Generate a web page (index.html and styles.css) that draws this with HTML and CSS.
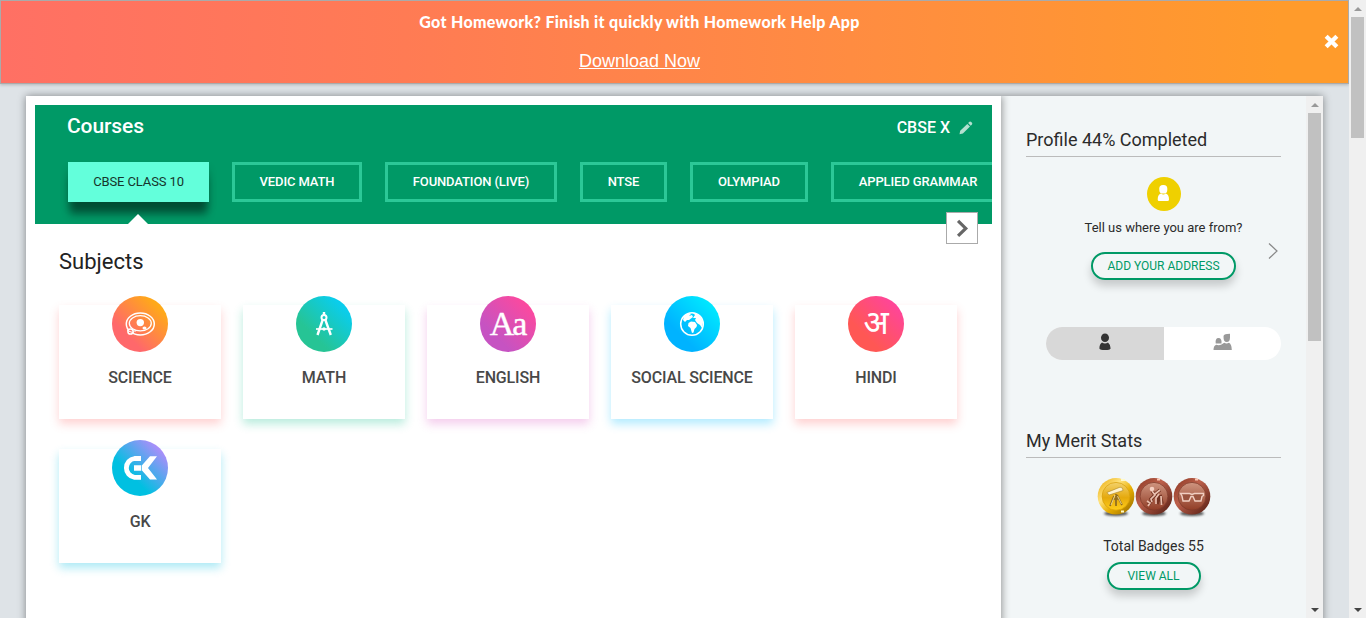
FILE: index.html
```html
<!DOCTYPE html>
<html lang="en">
<head>
<meta charset="utf-8">
<title>Courses</title>
<link rel="stylesheet" href="styles.css">
</head>
<body>
<div class="page">
  <header class="banner">
    <div class="banner-text">
      <p class="banner-title">Got Homework? Finish it quickly with Homework Help App</p>
      <a class="banner-link">Download Now</a>
    </div>
    <svg class="banner-close" viewBox="0 0 14 14"><path d="M2 2 12 12M12 2 2 12" stroke="#fff" stroke-width="4"/></svg>
  </header>
  <div class="panel">
    <main class="main">
      <section class="courses">
        <div class="courses-head">
          <h1 class="courses-title">Courses</h1>
          <div class="grade">CBSE X
            <svg class="pencil" viewBox="0 0 14 14"><path d="M.5 13.2 1.2 9.8 8.3 2.9 11 5.6 3.9 12.5zM9.1 2.1 10.5.8Q11.4.2 12.2 1L13 1.8Q13.6 2.6 13 3.5L11.7 4.8z" fill="#b3e0d0"/></svg>
          </div>
        </div>
        <div class="tabs">
          <span class="tab tab-active">CBSE CLASS 10</span>
          <span class="tab tab-2">VEDIC MATH</span>
          <span class="tab tab-3">FOUNDATION (LIVE)</span>
          <span class="tab tab-4">NTSE</span>
          <span class="tab tab-5">OLYMPIAD</span>
          <span class="tab tab-6">APPLIED GRAMMAR</span>
        </div>
      </section>
      <span class="next"><svg viewBox="0 0 32 32"><path d="M11.800 8.500 20 16.500 11.800 24.500" fill="none" stroke="#666" stroke-width="3.400"/></svg></span>
      <h2 class="subjects-title">Subjects</h2>
      <div class="subjects">
        <div class="card science"><div class="disc">
          <svg viewBox="0 0 56 56" fill="none" stroke="#fff"><ellipse cx="28.300" cy="28" rx="14" ry="11" stroke-width="1.500"/><ellipse cx="28.300" cy="27.300" rx="11" ry="7.600" stroke-width="1.300"/><circle cx="28.300" cy="26.600" r="3.700" fill="#fff" stroke="none"/><ellipse cx="32.500" cy="32" rx="2" ry="1.500" fill="#fff" stroke="none"/><circle cx="18.500" cy="35.500" r="2.600" fill="#ff7467" stroke-width="1.500"/><path d="M15 34.500 22 37M21 35h3" stroke-width="1"/></svg></div><p>SCIENCE</p></div>
        <div class="card math"><div class="disc">
          <svg viewBox="0 0 56 56" fill="none" stroke="#fff"><path d="M28 16v4M26.800 23.500 21.500 39M29.200 23.500 34.800 39" stroke-width="2.400"/><circle cx="28" cy="21.500" r="2.500" stroke-width="2"/><path d="M20 33H36.500" stroke-width="1.700"/><circle cx="28" cy="33" r="1.700" fill="#fff" stroke="none"/></svg></div><p>MATH</p></div>
        <div class="card english"><div class="disc"><span class="letters">Aa</span></div><p>ENGLISH</p></div>
        <div class="card social"><div class="disc">
          <svg viewBox="0 0 56 56"><circle cx="28" cy="28" r="11.300" fill="none" stroke="#fff" stroke-width="1.500"/><path d="M20 20 24 17.500 27 18 25 20 28 19 29 21 27 22.500 25 24 23 24 21 26 19 24zM29 17Q37 18 39 26L38 32 36 29 33 27 31 24 32 22 29 22 31 19zM24.500 27 27 25.500 31 26 33 29 32.500 31 30.500 33 29.500 36.500 28 37 26.500 32 24 30z" fill="#fff"/></svg></div><p>SOCIAL SCIENCE</p></div>
        <div class="card hindi"><div class="disc"><span class="devanagari" lang="hi">अ</span></div><p>HINDI</p></div>
        <div class="card gk"><div class="disc">
          <svg viewBox="0 0 56 56"><path d="M29 18.500H22.500A9.500 9.500 0 0 0 22.500 37.300H29" fill="none" stroke="#fff" stroke-width="4.800"/><path d="M22 25.300h7.300v5.400H22zM38 16.200h7L36 27.900 45 39.600h-7L30 30.500v-5.300z" fill="#fff"/></svg></div><p>GK</p></div>
      </div>
    </main>
    <aside class="side">
      <h3>Profile 44% Completed</h3>
      <div class="profile">
        <div class="avatar"><svg viewBox="0 0 34 34" fill="#fff"><rect x="12.300" y="8" width="8" height="8.500" rx="3.600"/><path d="M14 16.500Q16.300 18.500 18.800 16.500 22 17.500 22 22.500 22 24 20.500 24H12Q10.700 24 10.700 22.500 10.700 17.500 14 16.500z"/></svg></div>
        <p class="question">Tell us where you are from?</p>
        <span class="pill pill-address">ADD YOUR ADDRESS</span>
        <svg class="profile-next" viewBox="0 0 10 18"><path d="M1 1.500 9 9 1 16.500" fill="none" stroke="#888" stroke-width="1.200"/></svg>
      </div>
      <div class="toggle">
        <span class="toggle-on"><svg viewBox="0 0 12 18" fill="#333"><ellipse cx="6" cy="4.800" rx="4" ry="4.300"/><path d="M3 9.500Q6 11.300 9 9.500 11.600 11.500 11.600 15.500 11 17 6 17T.4 15.500Q.4 11 3 9.500z"/></svg></span>
        <span class="toggle-off"><svg class="pair" viewBox="0 0 19 18" fill="#999"><path d="M10.500 3.500Q10.500 1 14 1L17 .8V4.500Q17 9 13.700 9T10.500 3.500zM2.700 10.500Q2 5 5.500 5T8.500 10.500zM.5 17Q.5 12.800 3.200 11.800 6 12.600 8.500 11.500L11.200 9.800Q13.500 11 16 9.800 18.800 11.500 18.800 17z"/></svg></span>
      </div>
      <h3>My Merit Stats</h3>
      <div class="badges">
        <svg viewBox="0 0 38 40">
          <defs>
            <linearGradient id="gold" x2="1" y2="1"><stop stop-color="#e7a500"/><stop offset=".35" stop-color="#ffe27c"/><stop offset=".6" stop-color="#e7ad00"/><stop offset="1" stop-color="#8d6200"/></linearGradient>
            <linearGradient id="bronze" x2="1" y2="1"><stop stop-color="#873521"/><stop offset=".4" stop-color="#bd604b"/><stop offset="1" stop-color="#4f1a10"/></linearGradient>
            <linearGradient id="copper" x2="0" y2="1"><stop stop-color="#cf9580"/><stop offset="1" stop-color="#913d26"/></linearGradient>
            <linearGradient id="amber" x2="0" y2="1"><stop stop-color="#f3d16a"/><stop offset=".55" stop-color="#e5a90d"/><stop offset="1" stop-color="#ffce19"/></linearGradient>
            <filter id="soft" x="-20%" width="140%" y="-100%" height="300%"><feGaussianBlur stdDeviation="1"/></filter>
          </defs>
          <ellipse cx="19" cy="35.500" rx="12" ry="2.500" fill="#555" filter="url(#soft)"/><circle cx="19" cy="18.300" r="18.300" fill="url(#gold)"/><circle cx="19" cy="18.300" r="13.900" fill="url(#amber)" stroke="#d79e09" stroke-width=".7"/><path d="M17 18 13 28M19 16v12M20 17 25 27M16 21h6" fill="none" stroke="#8c6b22" stroke-width="1.700"/><path d="M18 17 14 27M20.500 18 24.500 26" stroke="#ffe9a0" stroke-width=".8"/><path d="M10 14.500 23 9.200Q26 9 26 12.500L12 17z" fill="#fff4d0" stroke="#9b7418" stroke-width=".5"/><path d="M24 33.500h3M24 2h4" stroke="#fff9c9" stroke-width="2"/>
        </svg>
        <svg viewBox="0 0 38 40"><ellipse cx="19" cy="35.500" rx="12" ry="2.500" fill="#555" filter="url(#soft)"/><circle cx="19" cy="18.300" r="18.300" fill="url(#bronze)"/><circle cx="19" cy="18.300" r="13.900" fill="url(#copper)" stroke="#7d3929" stroke-width=".7"/><path d="M17 13 20 17 16 21 17 24M20 16 25 12M24 17 22 26M25 17 27 26M13 24l3 2" fill="none" stroke="#743322" stroke-width="3.500"/><circle cx="17" cy="11" r="2.300" fill="#f5d0c2"/><path d="M17 13 20 17 16 21 17 24M20 16 25 12M24 16 21 20 21 26M26 18 26.500 27M12 23l3 2-2 3" fill="none" stroke="#e9bfae" stroke-width="1.700"/><path d="M22 1.500h3" stroke="#ffc7b3" stroke-width="2"/></svg>
        <svg viewBox="0 0 38 40"><ellipse cx="19" cy="35.500" rx="12" ry="2.500" fill="#555" filter="url(#soft)"/><circle cx="19" cy="18.300" r="18.300" fill="url(#bronze)"/><circle cx="19" cy="18.300" r="13.900" fill="url(#copper)" stroke="#7d3929" stroke-width=".7"/><path d="M7.500 15.500h9l2.500 1 2.500-1h9v2l-1.500 1-1 4.500h-6l-2-4.500h-2l-2 4.500h-6l-1-5z" fill="#9a543f" stroke="#f1cfc2" stroke-width="1.400"/><path d="M22 1.500h3" stroke="#ffc7b3" stroke-width="2"/></svg>
      </div>
      <p class="total">Total Badges 55</p>
      <span class="pill pill-view">VIEW ALL</span>
    </aside>
    <div class="scrollbar"><i class="up"></i><i class="thumb thumb-inner"></i><i class="down"></i></div>
  </div>
</div>
<div class="scrollbar scrollbar-page"><i class="up"></i><i class="thumb thumb-page"></i><i class="down"></i></div>
</body>
</html>
```
FILE: styles.css
```css
* { box-sizing: border-box; }
html, body { height: 100%; }
body { margin: 0; display: flex; overflow: hidden; background: #dee3e7; color: #2b2b2b; font-family: Roboto, "Noto Sans", sans-serif; }
h1, h2, h3, p { margin: 0; font-weight: 400; }
svg { display: block; }

.page { width: 1349px; height: 618px; overflow: hidden; }
.banner { position: relative; height: 84px; border: 1px solid #aaa; background: linear-gradient(90deg, #ff7064, #ff7b54 30%, #ff8d40 65%, #ff9b2b 95%); color: #fff; box-shadow: 0 1px 3px rgba(0,0,0,.2); }
.banner-text { width: 1277px; padding-top: 10px; display: flex; flex-direction: column; align-items: center; gap: 19px; }
.banner-title { font: 900 16px/21px Lato, sans-serif; letter-spacing: .32px; white-space: nowrap; }
.banner-link { font: 18px/20px "Liberation Sans", sans-serif; text-decoration: underline; }
.banner-close { position: absolute; left: 1323px; top: 33px; width: 15px; height: 15px; }

.panel { display: flex; width: 1297px; height: 540px; margin: 12px 0 0 26px; box-shadow: 0 0 8px rgba(0,0,0,.42); }
.main { position: relative; width: 975px; background: #fff; padding: 9px; box-shadow: 1px 0 8px rgba(0,0,0,.4); clip-path: inset(0 -10px 0 0); z-index: 1; }
.courses { height: 119px; background: #009966; color: #fff; overflow: hidden; }
.courses-head { display: flex; justify-content: space-between; height: 57px; padding: 9px 19px 0 32px; }
.courses-title { font-size: 21px; line-height: 25px; font-weight: 500; letter-spacing: -.1px; }
.grade { display: flex; align-items: center; gap: 9px; height: 27px; font-size: 16px; font-weight: 500; }
.pencil { width: 14px; height: 14px; }
.tabs { display: flex; gap: 23px; padding-left: 33px; }
.tab { flex: none; display: flex; align-items: center; justify-content: center; height: 40px; padding-bottom: 1px; border: 3px solid #2cc897; font-size: 13px; font-weight: 500; letter-spacing: -.12px; white-space: nowrap; }
.tab-active { position: relative; width: 141px; border: 0; background: #63ffdb; color: #16352c; font-weight: 400; box-shadow: 0 14px 8px -2px rgba(0,0,0,.42), 0 6px 8px rgba(0,0,0,.15); }
.tab-active::after { content: ""; position: absolute; left: 60px; top: 52px; border: 10px solid transparent; border-top: 0; border-bottom-color: #fff; }
.tab-2 { width: 130px; }
.tab-3 { width: 172px; }
.tab-4 { width: 87px; }
.tab-5 { width: 118px; }
.tab-6 { width: 174px; }
.next { position: absolute; left: 920px; top: 116px; width: 32px; height: 32px; border: 1px solid #aaa; background: #fff; }

.subjects-title { padding: 24px 0 0 24px; font-size: 22px; line-height: 28px; color: #222; }
.subjects { display: grid; grid-template-columns: repeat(5, 162px); gap: 30px 22px; padding: 29px 0 0 24px; }
.card { height: 114px; background: #fff; display: flex; flex-direction: column; align-items: center; }
.card p { margin-top: 16px; font-size: 16px; line-height: 20px; font-weight: 500; letter-spacing: -.15px; color: #484848; }
.disc { width: 56px; height: 56px; margin-top: -9px; border-radius: 50%; color: #fff; display: flex; align-items: center; justify-content: center; }
.disc svg { width: 56px; height: 56px; }
.letters { font: 34px/56px "Liberation Serif", serif; letter-spacing: -2px; padding-right: 1px; -webkit-text-stroke: .4px #fff; }
.devanagari { font: 33px/56px "Noto Sans Devanagari", "Noto Sans", sans-serif; padding-top: 3px; }
.science { box-shadow: 0 5px 9px rgba(255,107,107,.3); }
.science .disc { background: linear-gradient(45deg, #ff686b 28%, #ffa919 82%); }
.math { box-shadow: 0 5px 9px rgba(38,197,148,.32); }
.math .disc { background: linear-gradient(45deg, #26c495 30%, #0acdec 82%); }
.english { box-shadow: 0 5px 9px rgba(214,75,190,.28); }
.english .disc { background: linear-gradient(45deg, #c653c2 28%, #fc499e 85%); }
.social { box-shadow: 0 5px 9px rgba(0,190,255,.3); }
.social .disc { background: linear-gradient(45deg, #00b3ff 30%, #00e8ff 85%); }
.hindi { box-shadow: 0 5px 9px rgba(255,85,85,.28); }
.hindi .disc { background: linear-gradient(45deg, #ff5754 30%, #ff4599 85%); }
.gk { box-shadow: 0 5px 9px rgba(0,190,225,.32); }
.gk .disc { background: linear-gradient(45deg, #00c0e1 35%, #b58bfb 88%); }

.side { width: 305px; background: #f2f6f7; padding: 31px 25px 0; display: flex; flex-direction: column; }
.side h3 { height: 30px; border-bottom: 1px solid #bbb; font-size: 18px; line-height: 26px; color: #2b2b2b; }
.profile { position: relative; display: flex; flex-direction: column; align-items: center; padding: 20px 0 0 20px; height: 170px; }
.avatar { width: 34px; height: 34px; border-radius: 50%; background: #efd000; }
.question { margin: 8px 0 15px; font-size: 13px; line-height: 18px; }
.pill { height: 28px; border: 2px solid #009966; border-radius: 14px; color: #009966; font-size: 12px; line-height: 24px; text-align: center; box-shadow: 0 6px 8px rgba(0,0,0,.18); }
.pill-address { width: 145px; }
.profile-next { position: absolute; left: 242px; top: 85px; width: 10px; height: 18px; }
.toggle { display: flex; height: 33px; width: 235px; margin: 0 0 68px 20px; border-radius: 17px; overflow: hidden; background: #fff; }
.toggle span { flex: 1; display: flex; align-items: center; justify-content: center; padding-bottom: 3px; }
.toggle-on { background: #d8d8d8; }
.toggle-on svg { width: 12px; height: 18px; }
.pair { width: 19px; height: 18px; }
.badges { display: flex; justify-content: center; margin-top: 20px; }
.badges svg { width: 38px; height: 40px; }
.total { margin-top: 18px; font-size: 14px; line-height: 20px; text-align: center; }
.pill-view { width: 94px; margin: 6px auto 0; }

.scrollbar { flex: none; width: 17px; height: 522px; background: #f0f0f0; display: flex; flex-direction: column; align-items: center; padding: 7px 0 6px; }
.scrollbar-page { height: 618px; }
.thumb { width: 13px; background: #c1c1c1; margin-top: 6px; margin-bottom: auto; }
.thumb-inner { height: 228px; }
.thumb-page { height: 121px; }
.up, .down { border: 4px solid transparent; }
.up { border-top: 0; border-bottom-color: #999; }
.down { border-bottom: 0; border-top-color: #444; }
```
